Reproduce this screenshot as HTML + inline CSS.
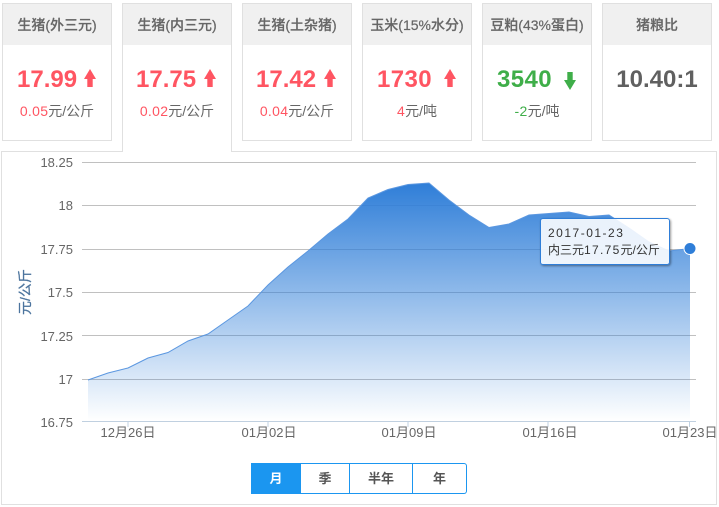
<!DOCTYPE html>
<html><head><meta charset="utf-8">
<style>
*{box-sizing:border-box}
html,body{margin:0;padding:0;background:#fff;width:719px;height:507px;overflow:hidden;font-family:"Liberation Sans","Noto Sans CJK SC",sans-serif}
.card{position:absolute;top:3px;width:110px;height:138px;border:1px solid #e0e0e0;background:#fff;z-index:1}
.card.on{height:149px;border-bottom:0;z-index:3}
.h{height:41px;background:#f0f0f0;text-align:center;font-size:14px;font-weight:500;line-height:42px;color:#666;white-space:nowrap;-webkit-text-stroke:.2px #666}
.n{position:absolute;top:60px;font-size:24px;font-weight:bold;line-height:32px;color:#ff5562;white-space:nowrap}
.s{position:absolute;left:0;width:108px;top:97px;text-align:center;font-size:14px;line-height:20px;color:#666;white-space:nowrap}
.s i{font-style:normal;color:#ff5562;letter-spacing:.3px}
.s i.g{color:#3fae49}
.ar{position:absolute;left:81px;top:65px}
#box{position:absolute;left:1px;top:151px;width:716px;height:354px;border:1px solid #e0e0e0;z-index:2}
svg.c{position:absolute;left:0;top:0;z-index:2}
svg text{font-family:"Liberation Sans","Noto Sans CJK SC",sans-serif}
#tip{position:absolute;left:540px;top:218px;width:130px;height:47px;border:1px solid #2f7ed8;border-radius:3px;background:rgba(255,255,255,.88);box-shadow:1px 1px 2px rgba(0,0,0,.4);z-index:4;font-size:12px;line-height:17px;color:#333;padding:6px 0 0 7px;white-space:nowrap}
#tip span{letter-spacing:1.3px}
.b{position:absolute;top:463px;height:31px;border:1px solid #1b96f0;border-left-width:0;font-size:13px;font-weight:bold;text-align:center;line-height:29px;color:#555;z-index:4;background:#fff}
</style></head><body>
<div class="card" style="left:2px"><div class="h">生猪(外三元)</div><div class="n" style="left:14px">17.99</div><svg class="ar" width="12" height="18"><path d="M6 0L12 10H8.700V18H3.300V10H0Z" fill="#ff5562"/></svg><div class="s"><i>0.05</i>元/公斤</div></div>
<div class="card on" style="left:122px"><div class="h">生猪(内三元)</div><div class="n" style="left:13px">17.75</div><svg class="ar" width="12" height="18"><path d="M6 0L12 10H8.700V18H3.300V10H0Z" fill="#ff5562"/></svg><div class="s"><i>0.02</i>元/公斤</div></div>
<div class="card" style="left:242px"><div class="h">生猪(土杂猪)</div><div class="n" style="left:13px">17.42</div><svg class="ar" width="12" height="18"><path d="M6 0L12 10H8.700V18H3.300V10H0Z" fill="#ff5562"/></svg><div class="s"><i>0.04</i>元/公斤</div></div>
<div class="card" style="left:362px"><div class="h">玉米(15%水分)</div><div class="n" style="left:14px;letter-spacing:.4px">1730</div><svg class="ar" width="12" height="18"><path d="M6 0L12 10H8.700V18H3.300V10H0Z" fill="#ff5562"/></svg><div class="s"><i>4</i>元/吨</div></div>
<div class="card" style="left:482px"><div class="h">豆粕(43%蛋白)</div><div class="n" style="left:14px;color:#3fae49;letter-spacing:.4px">3540</div><svg class="ar" style="top:68px" width="12" height="18"><path d="M6 18L12 8H8.700V0H3.300V8H0Z" fill="#3fae49"/></svg><div class="s"><i class="g">-2</i>元/吨</div></div>
<div class="card" style="left:602px"><div class="h">猪粮比</div><div class="n" style="left:0;width:108px;text-align:center;color:#606060">10.40:1</div></div>

<div id="box"></div>
<svg class="c" width="719" height="507" viewBox="0 0 719 507">
<defs><linearGradient id="g" x1="0" y1="183" x2="0" y2="421" gradientUnits="userSpaceOnUse"><stop offset="0" stop-color="#2f7ed8" stop-opacity="1"/><stop offset="1" stop-color="#2f7ed8" stop-opacity="0"/></linearGradient></defs>
<g stroke="#c0c0c0" stroke-width="1">
<path d="M82 162.5H696M82 205.5H696M82 249.5H696M82 292.5H696M82 335.5H696M82 379.5H696"/>
</g>
<path d="M88 380L108 373L128 368L148 358L168 352.5L188 341L208 334L228 320L248 306L268 285L288 267L308 251L328 234L348 219L368 198L388 189.5L408 184.5L429 183L449 200L469 215L489 227.5L509 224L529 215L549 213.5L569 212L589 216.5L609 215L629 228L649 242L669 251L690 248.5V421H88Z" fill="url(#g)"/>
<path d="M88 380L108 373L128 368L148 358L168 352.5L188 341L208 334L228 320L248 306L268 285L288 267L308 251L328 234L348 219L368 198L388 189.5L408 184.5L429 183L449 200L469 215L489 227.5L509 224L529 215L549 213.5L569 212L589 216.5L609 215L629 228L649 242L669 251L690 248.5" fill="none" stroke="#5b97e0" stroke-width="1"/>
<path d="M82 421.5H696M128 422V427M268 422V427M408 422V427M548 422V427M689.500 422V427" stroke="#c0d0e0" stroke-width="1" fill="none"/>
<circle cx="690" cy="248.500" r="6" fill="#2f7ed8" stroke="#fff" stroke-width="1"/>
<g font-size="13" fill="#666" text-anchor="end">
<text x="73" y="167">18.25</text><text x="73" y="210">18</text><text x="73" y="254">17.75</text><text x="73" y="297">17.5</text><text x="73" y="341">17.25</text><text x="73" y="384">17</text><text x="73" y="427">16.75</text>
</g>
<g font-size="13" fill="#666" text-anchor="middle">
<text x="128" y="437">12月26日</text><text x="269" y="437">01月02日</text><text x="409" y="437">01月09日</text><text x="550" y="437">01月16日</text><text x="690" y="437">01月23日</text>
</g>
<text transform="translate(30,292) rotate(-90)" font-size="14" fill="#4d759e" stroke="#4d759e" stroke-width=".25" text-anchor="middle">元/公斤</text>
</svg>
<div id="tip"><span style="letter-spacing:1.5px">2017-01-23</span><br>内三元<span>17.75</span>元/公斤</div>
<div class="b" style="left:251px;width:50px;background:#1b96f0;color:#fff;border-left-width:1px">月</div>
<div class="b" style="left:301px;width:49px">季</div>
<div class="b" style="left:350px;width:63px">半年</div>
<div class="b" style="left:413px;width:54px;border-radius:0 3px 3px 0">年</div>
</body></html>
